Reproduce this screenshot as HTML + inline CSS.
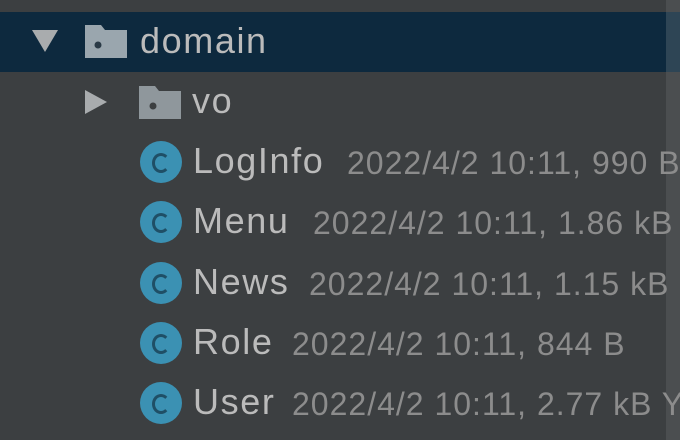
<!DOCTYPE html>
<html><head><style>
body{margin:0;width:680px;height:440px;background:#3c3f41;overflow:hidden;position:relative;font-family:"Liberation Sans",sans-serif}
.sel{position:absolute;left:0;top:12px;width:666px;height:60px;background:#0d293e}
.sb{position:absolute;left:666px;top:0;width:14px;height:440px;background:#4b4e50}
.sb2{position:absolute;left:666px;top:12px;width:14px;height:60px;background:#2e4555}
.n{position:absolute;font-size:36px;color:#bbbbbb;letter-spacing:1.6px;line-height:40px}
.t{position:absolute;font-size:32px;color:#8c8c8c;letter-spacing:1px;line-height:40px;white-space:nowrap}
.c{position:absolute;left:140px;width:42px;height:42px;border-radius:50%;background:#3b91b3}
.c::after{content:"";position:absolute;left:12px;top:12px;width:12px;height:14px;border:3px solid #1f4f66;border-right-color:transparent;border-radius:50%}
svg{position:absolute}
</style></head><body>
<div class="sel"></div><div class="sb"></div><div class="sb2"></div>
<svg style="left:32px;top:30px" width="30" height="26"><polygon points="0,0 26,0 13,22" fill="#a9acae"/></svg>
<svg style="left:85px;top:25px" width="44" height="34"><path d="M0,0 H16 L20,5 H42 V33 H0Z" fill="#9aa6ae"/><circle cx="13" cy="20" r="3.5" fill="#2a3a46"/></svg>
<div class="n" style="left:140px;top:21px">domain</div>
<svg style="left:85px;top:90px" width="24" height="26"><polygon points="0,0 22,12 0,24" fill="#a9acae"/></svg>
<svg style="left:139px;top:86px" width="44" height="34"><path d="M0,0 H16 L20,5 H42 V33 H0Z" fill="#8f979c"/><circle cx="14" cy="20" r="3.5" fill="#3c3f41"/></svg>
<div class="n" style="left:192px;top:81px">vo</div>

<div class="c" style="top:141px"></div><div class="n" style="left:193px;top:141px">LogInfo</div><div class="t" style="left:347px;top:143px">2022/4/2 10:11, 990 B</div>
<div class="c" style="top:201px"></div><div class="n" style="left:193px;top:201px">Menu</div><div class="t" style="left:313px;top:203px">2022/4/2 10:11, 1.86 kB</div>
<div class="c" style="top:262px"></div><div class="n" style="left:193px;top:262px">News</div><div class="t" style="left:309px;top:264px">2022/4/2 10:11, 1.15 kB</div>
<div class="c" style="top:322px"></div><div class="n" style="left:193px;top:322px">Role</div><div class="t" style="left:292px;top:324px">2022/4/2 10:11, 844 B</div>
<div class="c" style="top:382px"></div><div class="n" style="left:193px;top:382px">User</div><div class="t" style="left:292px;top:384px">2022/4/2 10:11, 2.77 kB Y</div>
</body></html>
